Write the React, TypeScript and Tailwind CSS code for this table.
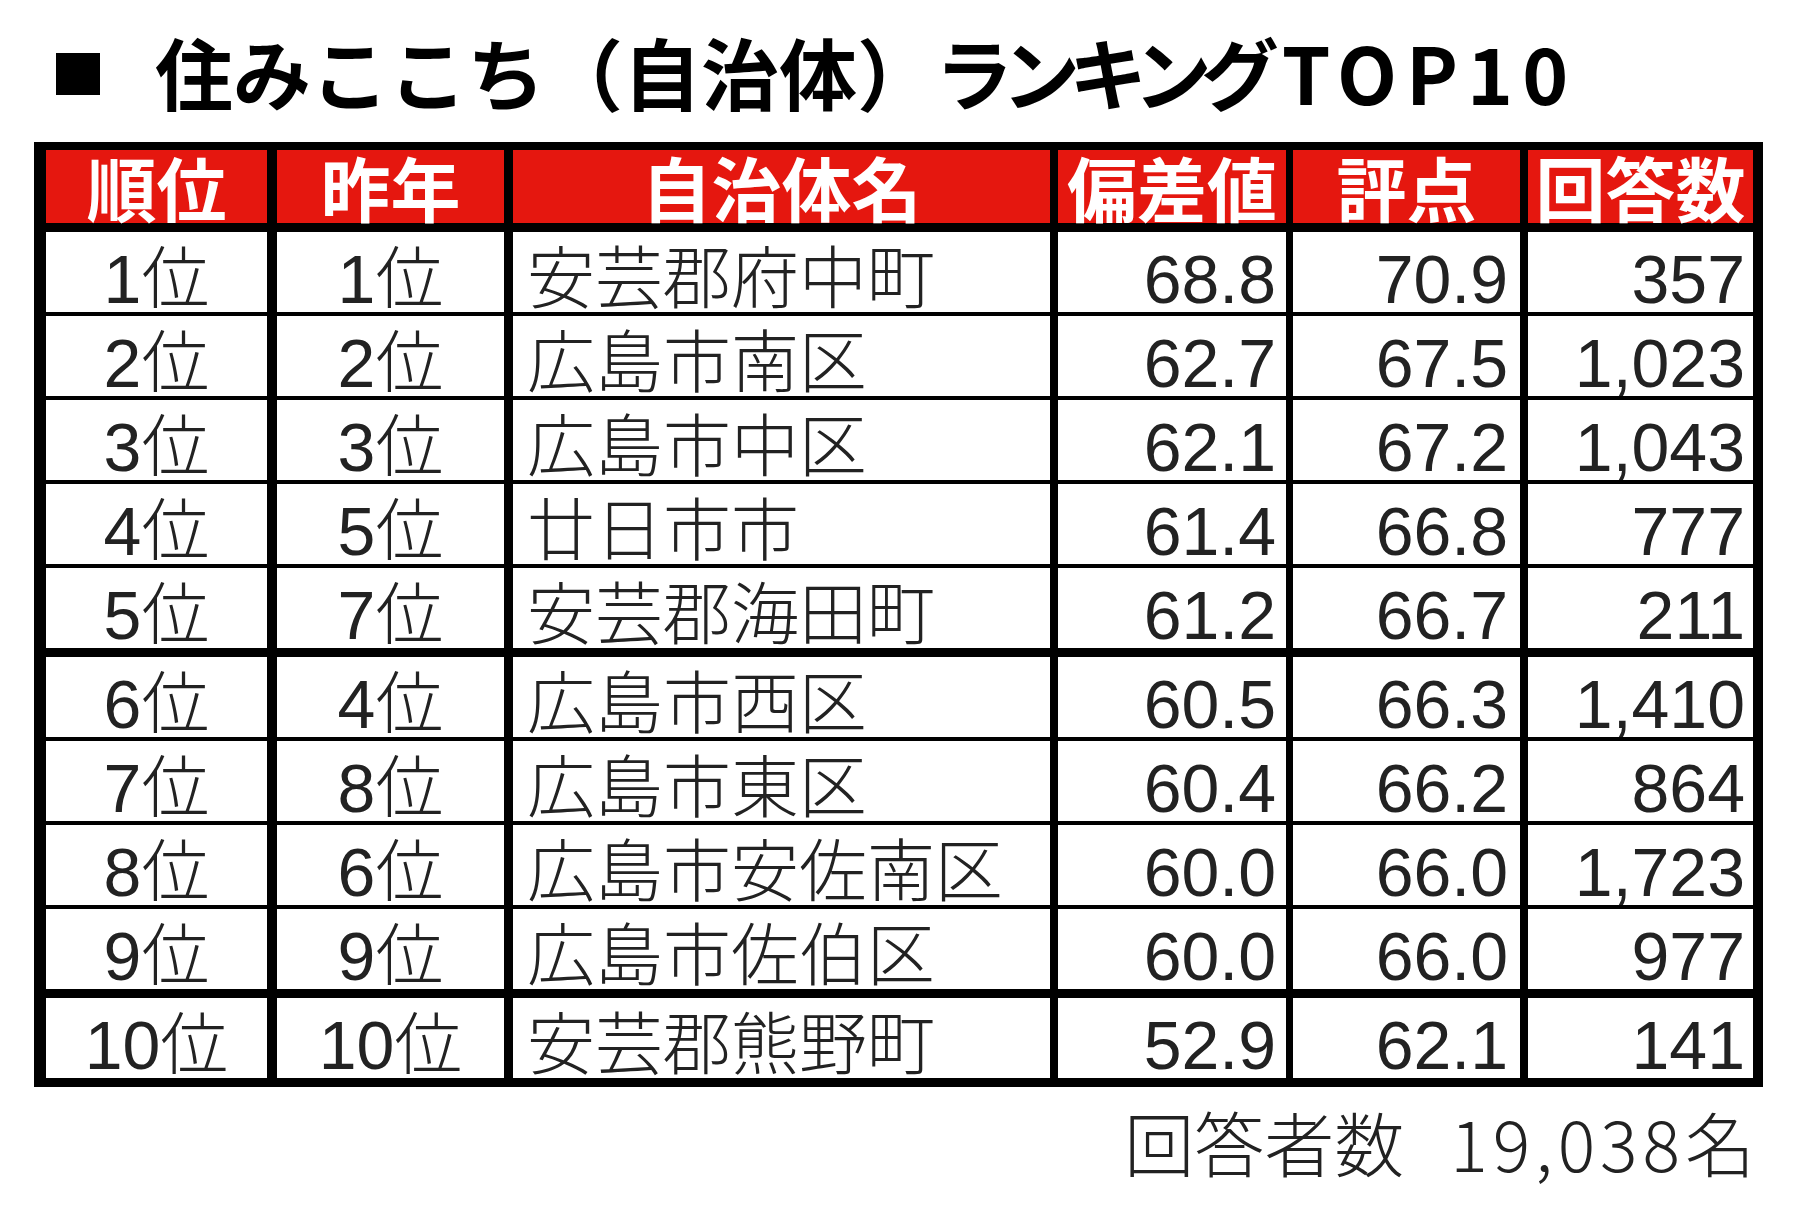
import React from "react";

type Row = [string, string, string, string, string, string];

const rows: Row[] = [
  ["1位", "1位", "安芸郡府中町", "68.8", "70.9", "357"],
  ["2位", "2位", "広島市南区", "62.7", "67.5", "1,023"],
  ["3位", "3位", "広島市中区", "62.1", "67.2", "1,043"],
  ["4位", "5位", "廿日市市", "61.4", "66.8", "777"],
  ["5位", "7位", "安芸郡海田町", "61.2", "66.7", "211"],
  ["6位", "4位", "広島市西区", "60.5", "66.3", "1,410"],
  ["7位", "8位", "広島市東区", "60.4", "66.2", "864"],
  ["8位", "6位", "広島市安佐南区", "60.0", "66.0", "1,723"],
  ["9位", "9位", "広島市佐伯区", "60.0", "66.0", "977"],
  ["10位", "10位", "安芸郡熊野町", "52.9", "62.1", "141"],
];

const bodyFont = {
  fontFamily: '"Liberation Sans", "Noto Sans CJK JP", sans-serif',
};

function HeaderCell({ className, children }: { className: string; children: React.ReactNode }) {
  return (
    <div className={`flex h-[73px] items-end justify-center pb-[1px] text-[70px] font-bold leading-none text-white ${className}`}>
      {children}
    </div>
  );
}

function BodyRow({ r, border }: { r: Row; border: string }) {
  return (
    <div className={`flex border-black ${border} text-[68px] font-light leading-none text-[#222222]`} style={bodyFont}>
      <div className="flex h-[80px] w-[221px] shrink-0 items-center justify-center pt-[13px]">{r[0]}</div>
      <div className="flex h-[80px] w-[237px] shrink-0 items-center justify-center border-l-[10px] border-black pt-[13px]">{r[1]}</div>
      <div className="flex h-[80px] w-[546px] shrink-0 items-center justify-start border-l-[9px] border-black pl-[14px] pt-[13px]">{r[2]}</div>
      <div className="flex h-[80px] w-[236px] shrink-0 items-center justify-end border-l-[8px] border-black pr-[10px] pt-[13px]">{r[3]}</div>
      <div className="flex h-[80px] w-[234px] shrink-0 items-center justify-end border-l-[7px] border-black pr-[12px] pt-[13px]">{r[4]}</div>
      <div className="flex h-[80px] w-[233px] shrink-0 items-center justify-end border-l-[8px] border-black pr-[8px] pt-[13px]">{r[5]}</div>
    </div>
  );
}

export default function App() {
  return (
    <div className="min-h-[1221px] w-[1800px] bg-white">
      <div
        className="mt-[32px] flex h-[78px] items-center pl-[56px] text-[78px] font-bold leading-none text-black"
        style={{ fontFamily: '"Noto Sans CJK JP", sans-serif' }}
      >
        <div className="mt-[6px] h-[42px] w-[44px] shrink-0 bg-black" />
        <div className="ml-[55px] flex items-center whitespace-nowrap">
          <span>住みここち（自治体）</span>
          <span className="tracking-[-11px]">ランキング</span>
          <span className="ml-[14px] tracking-[9px]">TOP10</span>
        </div>
      </div>

      <div className="ml-[34px] mt-[32px] w-[1729px] border-b-[9px] border-l-[12px] border-r-[10px] border-t-[8px] border-black bg-white">
        <div
          className="flex border-b-[9px] border-black bg-[#e5170f]"
          style={{ fontFamily: '"Noto Sans CJK JP", sans-serif' }}
        >
          <HeaderCell className="w-[221px] shrink-0">順位</HeaderCell>
          <HeaderCell className="w-[237px] shrink-0 border-l-[10px] border-black">昨年</HeaderCell>
          <HeaderCell className="w-[546px] shrink-0 border-l-[9px] border-black">自治体名</HeaderCell>
          <HeaderCell className="w-[236px] shrink-0 border-l-[8px] border-black">偏差値</HeaderCell>
          <HeaderCell className="w-[234px] shrink-0 border-l-[7px] border-black">評点</HeaderCell>
          <HeaderCell className="w-[233px] shrink-0 border-l-[8px] border-black">回答数</HeaderCell>
        </div>
        {rows.map((r, i) => {
          let border = "";
          if (i > 0) border = i === 5 || i === 9 ? "border-t-[9px]" : "border-t-[4px]";
          return <BodyRow key={i} r={r} border={border} />;
        })}
      </div>

      <div
        className="mt-[20px] flex w-[1763px] justify-end pr-[8px] text-[70px] font-light leading-none text-[#222222]"
        style={{ fontFamily: '"Noto Sans CJK JP", sans-serif' }}
      >
        <span>回答者数</span>
        <span className="ml-[46px] tracking-[5px]">19,038</span>
        <span>名</span>
      </div>
    </div>
  );
}
